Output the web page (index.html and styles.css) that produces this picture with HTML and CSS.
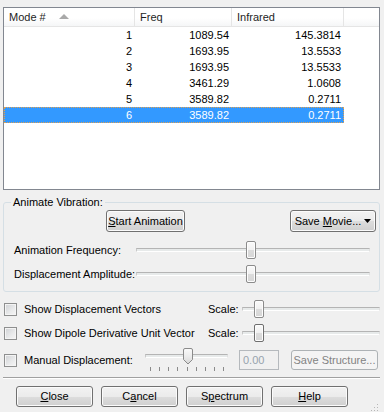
FILE: index.html
```html
<!DOCTYPE html>
<html lang="en">
<head>
    <meta charset="UTF-8">
    <meta name="viewport" content="width=device-width, initial-scale=1.0">
    <title>Vibrations</title>
    <link rel="stylesheet" href="styles.css">
</head>
<body>
    <div class="dialog">
        <div class="list">
            <div class="list__head">
                <div class="col col--mode">Mode #
                    <svg class="sort" width="10" height="5" viewBox="0 0 10 5"><path d="M0 5 L5 0 L10 5 Z" fill="#a9a9a9"/></svg>
                </div>
                <div class="col col--freq">Freq</div>
                <div class="col col--ir">Infrared</div>
                <div class="col col--fill"></div>
            </div>
            <div class="list__row"><span class="cell cell--mode">1</span><span class="cell cell--freq">1089.54</span><span class="cell cell--ir">145.3814</span></div>
            <div class="list__row"><span class="cell cell--mode">2</span><span class="cell cell--freq">1693.95</span><span class="cell cell--ir">13.5533</span></div>
            <div class="list__row"><span class="cell cell--mode">3</span><span class="cell cell--freq">1693.95</span><span class="cell cell--ir">13.5533</span></div>
            <div class="list__row"><span class="cell cell--mode">4</span><span class="cell cell--freq">3461.29</span><span class="cell cell--ir">1.0608</span></div>
            <div class="list__row"><span class="cell cell--mode">5</span><span class="cell cell--freq">3589.82</span><span class="cell cell--ir">0.2711</span></div>
            <div class="list__row list__row--selected"><span class="cell cell--mode">6</span><span class="cell cell--freq">3589.82</span><span class="cell cell--ir">0.2711</span></div>
        </div>

        <fieldset class="group">
            <legend class="group__title">Animate Vibration:</legend>
            <div class="group__buttons">
                <button class="btn btn--start"><span><u>S</u>tart Animation</span></button>
                <button class="btn btn--movie"><span>Save <u>M</u>ovie...</span>
                    <svg class="drop" width="7" height="4" viewBox="0 0 7 4"><path d="M0 0 H7 L3.5 4 Z" fill="#000"/></svg>
                </button>
            </div>
            <div class="field">
                <span class="field__label">Animation Frequency:</span>
                <div class="slider slider--wide">
                    <div class="slider__track"></div>
                    <div class="slider__thumb" style="left:110px"></div>
                </div>
            </div>
            <div class="field">
                <span class="field__label">Displacement Amplitude:</span>
                <div class="slider slider--wide">
                    <div class="slider__track"></div>
                    <div class="slider__thumb" style="left:110px"></div>
                </div>
            </div>
        </fieldset>

        <div class="check-row">
            <span class="check"></span>
            <span class="check-row__label">Show Displacement Vectors</span>
            <span class="scale-label">Scale:</span>
            <div class="slider slider--scale">
                <div class="slider__track"></div>
                <div class="slider__thumb" style="left:12px"></div>
            </div>
        </div>
        <div class="check-row">
            <span class="check"></span>
            <span class="check-row__label">Show Dipole Derivative Unit Vector</span>
            <span class="scale-label">Scale:</span>
            <div class="slider slider--scale">
                <div class="slider__track"></div>
                <div class="slider__thumb slider__thumb--pressed" style="left:12px"></div>
            </div>
        </div>
        <div class="check-row check-row--manual">
            <span class="check"></span>
            <span class="check-row__label check-row__label--short">Manual Displacement:</span>
            <div class="slider slider--ticks">
                <div class="slider__track"></div>
                <svg class="slider__pointer" style="left:38px" width="10" height="17" viewBox="0 0 10 17">
                    <defs>
                        <linearGradient id="pg" x1="0" y1="0" x2="0" y2="1">
                            <stop offset="0" stop-color="#fafafa"/>
                            <stop offset="0.5" stop-color="#ececec"/>
                            <stop offset="1" stop-color="#d6d6d6"/>
                        </linearGradient>
                    </defs>
                    <path d="M0.5 2 Q0.5 0.5 2 0.5 H8 Q9.5 0.5 9.5 2 V11.5 L5 16 L0.5 11.5 Z" fill="url(#pg)" stroke="#8b8b8b"/>
                </svg>
                <div class="ticks">
                    <i></i><i></i><i></i><i></i><i></i><i></i><i></i><i></i><i></i>
                </div>
            </div>
            <span class="textbox">0.00</span>
            <button class="btn btn--disabled"><span>Save Structure...</span></button>
        </div>

        <div class="separator"></div>

        <div class="actions">
            <button class="btn btn--action"><span><u>C</u>lose</span></button>
            <button class="btn btn--action"><span>C<u>a</u>ncel</span></button>
            <button class="btn btn--action"><span>S<u>p</u>ectrum</span></button>
            <button class="btn btn--action"><span><u>H</u>elp</span></button>
            <svg class="grip" width="9" height="9" viewBox="0 0 9 9">
                <g fill="#b7b7b7">
                    <rect x="7" y="1" width="1" height="1"/>
                    <rect x="4" y="4" width="1" height="1"/>
                    <rect x="7" y="4" width="1" height="1"/>
                    <rect x="1" y="7" width="1" height="1"/>
                    <rect x="4" y="7" width="1" height="1"/>
                    <rect x="7" y="7" width="1" height="1"/>
                </g>
            </svg>
        </div>
    </div>
</body>
</html>
```

FILE: styles.css
```css
* {
    box-sizing: border-box;
}
body {
    margin: 0;
    width: 384px;
    height: 412px;
    overflow: hidden;
    background: #f0f0f0;
    font: 11px/13px "Liberation Sans", Arial, sans-serif;
    color: #000;
}
u {
    text-decoration: underline;
    text-underline-offset: 1px;
}
.dialog {
    padding: 7px 4px 0 3px;
}

/* list view */
.list {
    height: 183px;
    border: 1px solid #828790;
    background: #fff;
}
.list__head {
    display: flex;
    height: 19px;
    border-bottom: 1px solid #e5e5e5;
    background: linear-gradient(to bottom, #ffffff 0%, #ffffff 55%, #f5f6f7 100%);
}
.col {
    display: flex;
    align-items: center;
    padding-left: 5px;
    border-right: 1px solid #e5e5e5;
    color: #1e1e1e;
}
.col--mode { width: 131px; }
.col--freq { width: 97px; }
.col--ir { width: 112px; }
.col--fill { flex: 1; border-right: none; }
.sort {
    margin-left: 13px;
    margin-top: -2px;
}
.list__row {
    display: flex;
    width: 340px;
    height: 16px;
    line-height: 16px;
}
.list__row--selected {
    background: #3399ff;
    color: #fff;
    outline: 1px dotted #e0a050;
    outline-offset: -1px;
}
.cell {
    text-align: right;
    padding-right: 3px;
}
.cell--mode { width: 131px; }
.cell--freq { width: 97px; }
.cell--ir { width: 112px; }

/* group box */
.group {
    margin: 6px 0 0;
    padding: 0 0 5px;
    min-width: 0;
    border: 1px solid #d5dfe5;
    border-radius: 3px;
}
.group__title {
    margin-left: 7px;
    padding: 0 2px;
    line-height: 13px;
}
.group__buttons {
    display: flex;
    margin-top: 1px;
    height: 22px;
}
.btn--start {
    width: 79px;
    margin-left: 102px;
}
.btn--movie {
    width: 86px;
    margin-left: auto;
    margin-right: 3px;
    justify-content: flex-start;
    padding-left: 6px;
}
.drop {
    margin-left: 3px;
}
.field {
    display: flex;
    align-items: center;
    height: 24px;
    padding-left: 10px;
}
.group__buttons + .field {
    margin-top: 6px;
}
.field__label {
    width: 122px;
}

/* buttons */
.btn {
    display: flex;
    align-items: center;
    justify-content: center;
    height: 22px;
    padding: 0;
    border: 1px solid #707070;
    border-radius: 3px;
    background: linear-gradient(to bottom, #f2f2f2 0%, #ebebeb 50%, #dddddd 50%, #cfcfcf 100%);
    box-shadow: inset 0 0 0 1px #fbfbfb;
    font: inherit;
    color: #000;
    white-space: nowrap;
}
.btn--disabled {
    width: 87px;
    height: 20px;
    margin-left: 12px;
    border-color: #adb2b5;
    background: #f4f4f4;
    box-shadow: none;
    color: #838383;
}
.btn--action {
    width: 77px;
    height: 21px;
}

/* sliders */
.slider {
    position: relative;
    height: 24px;
    display: flex;
    align-items: center;
}
.slider--wide { width: 234px; }
.slider--scale { width: 138px; }
.slider__track {
    width: 100%;
    height: 4px;
    border-top: 1px solid #b4b4b4;
    border-bottom: 1px solid #ffffff;
    border-left: 1px solid #c8c8c8;
    border-right: 1px solid #e0e0e0;
    background: #e7eaea;
}
.slider__thumb {
    position: absolute;
    top: 3px;
    width: 10px;
    height: 18px;
    border: 1px solid #8b8b8b;
    border-radius: 2px;
    background: linear-gradient(to bottom, #fafafa 0%, #f0f0f0 50%, #dcdcdc 51%, #d6d6d6 100%);
    box-shadow: inset 0 0 0 1px #fdfdfd;
}
.slider__thumb--pressed {
    border-color: #6e6e6e;
}

/* check rows */
.check-row {
    display: flex;
    align-items: center;
    height: 24px;
}
.group + .check-row {
    margin-top: 5px;
}
.check-row--manual {
    margin-top: 3px;
}
.check {
    width: 13px;
    height: 13px;
    margin-left: 1px;
    border: 1px solid #8e8f8f;
    background: linear-gradient(135deg, #cfd1d4 0%, #e9eaeb 60%, #f6f6f6 100%);
    box-shadow: inset 0 0 0 1px #f4f4f4;
}
.check-row__label {
    width: 184px;
    margin-left: 7px;
}
.check-row__label--short {
    width: 121px;
}
.scale-label {
    width: 34px;
}
.slider--ticks {
    width: 83px;
    display: block;
}
.slider--ticks .slider__track {
    position: absolute;
    top: 6px;
    left: 0;
}
.slider__pointer {
    position: absolute;
    top: 0;
}
.ticks {
    position: absolute;
    left: 0;
    right: 0;
    top: 19px;
    display: flex;
    justify-content: space-between;
    padding: 0 4px 0 5px;
}
.ticks i {
    width: 1px;
    height: 4px;
    background: #8a8a8a;
}
.textbox {
    display: flex;
    align-items: center;
    width: 40px;
    height: 20px;
    margin-left: 11px;
    padding-left: 3px;
    border: 1px solid #b5b9bd;
    background: #f0f0f0;
    color: #97a3ae;
}

/* bottom */
.separator {
    margin-top: 5px;
    border-top: 1px solid #a0a0a0;
    border-bottom: 1px solid #ffffff;
}
.actions {
    display: flex;
    gap: 8px;
    margin-top: 7px;
    padding-left: 13px;
}
.grip {
    margin-left: auto;
    margin-right: 1px;
    align-self: flex-end;
    margin-bottom: -5px;
}
```
